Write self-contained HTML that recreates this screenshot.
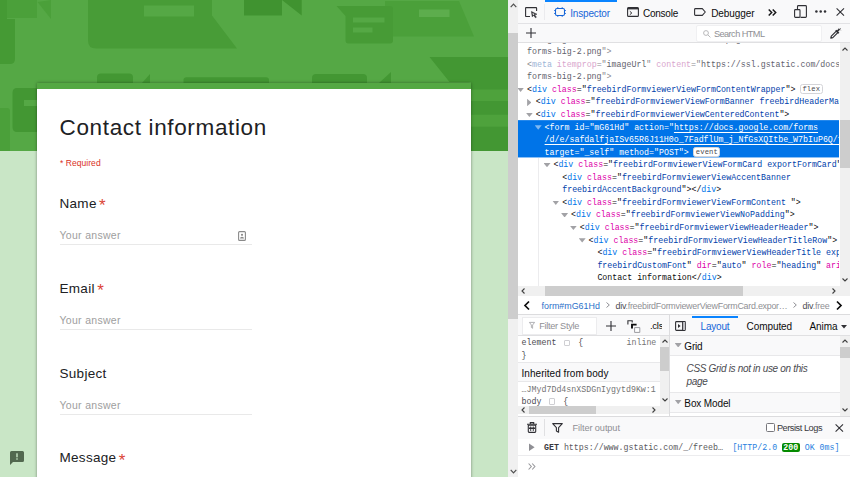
<!DOCTYPE html>
<html><head><meta charset="utf-8"><title>Contact information</title>
<style>
*{box-sizing:border-box;margin:0;padding:0}
html,body{width:850px;height:477px;overflow:hidden;background:#c9e6c6}
body{position:relative;font-family:"Liberation Sans",sans-serif;color:#202124}
#page{position:absolute;left:0;top:0;width:508px;height:477px;overflow:hidden;background:#c9e6c6}
#hdr{position:absolute;left:0;top:0;width:508px;height:151px}
#card{position:absolute;left:37px;top:83px;width:434px;height:420px;background:#fff;box-shadow:0 0 3px rgba(0,0,0,.4)}
#accent{position:absolute;left:0;top:0;width:100%;height:6px;background:#54a843}
.t{position:absolute;white-space:nowrap;line-height:1}
.title{left:59.5px;top:117px;font-size:22.5px;letter-spacing:.65px;color:#202124}
.req{left:60px;top:158.5px;font-size:8.5px;color:#d93025;letter-spacing:.05px}
.lbl{left:59.5px;font-size:13.5px;letter-spacing:.3px;color:#202124}
.lbl i{font-style:normal;color:#db4437;font-size:17px;line-height:0;position:relative;top:3.5px;margin-left:-1.7px;letter-spacing:0}
.ph{left:59.5px;font-size:10.5px;letter-spacing:.3px;color:#9e9e9e}
.ul{position:absolute;left:60px;width:192px;height:1px;background:#e9e9e9}
#pscroll{position:absolute;left:508px;top:0;width:10px;height:477px;background:#f0f0f0}
#pscroll .th{position:absolute;left:0;top:33px;width:10px;height:286px;background:#cdcdcd}
#dt{position:absolute;left:518px;top:0;width:332px;height:477px;background:#fff;font-size:9px;color:#0c0c0d;overflow:hidden}
#tb1{position:absolute;left:0;top:0;width:332px;height:24px;background:#f9f9fa;border-bottom:1px solid #e2e2e5}
#tb2{position:absolute;left:0;top:24px;width:332px;height:19px;background:#f9f9fa;border-bottom:1px solid #e0e0e2}
.ui{position:absolute;white-space:nowrap;line-height:1;font-size:9.6px;color:#0c0c0d}
.ic{position:absolute;overflow:visible}
#mk{position:absolute;left:0;top:43px;width:321px;height:243px;overflow:hidden;background:#fff}
.row{position:absolute;left:0;width:321px;height:12.5px;line-height:12.5px;white-space:pre;font-family:"Liberation Mono",monospace;font-size:8.29px;color:#0c0c0d;overflow:hidden}
.row b{font-weight:normal;color:#0074e8}
.row i{font-style:normal;color:#dd00a9}
.row u{text-decoration:none;color:#003eaa}
.row.dim{color:#8a8a8f}.row.dim b{color:#9db4d6}.row.dim i{color:#d9a6cd}.row.dim u{color:#62626c}
.row.sel,.row.sel b,.row.sel i,.row.sel u{color:#fff}

.row.sel .lk{text-decoration:underline;text-underline-offset:1.5px;text-decoration-thickness:.8px;color:#fff}
.tw{position:absolute;display:block;background:#a2a2a6}
.tw.d{width:7px;height:4.4px;top:3.7px;clip-path:polygon(0 0,100% 0,50% 100%)}
.tw.r{width:4.3px;height:7.6px;top:2.2px;clip-path:polygon(0 0,100% 50%,0 100%)}
.sel .tw.d{background:#7db8f3}
.badge{display:inline-block;font-size:7.2px;line-height:8px;height:9.4px;border:1px solid #d4d4d8;border-radius:2.5px;padding:0 1.5px;color:#4a4a4f;vertical-align:.5px;margin-left:4.5px;background:#fff;letter-spacing:.1px}
.sel .badge{display:inline-block;font-size:7.2px;line-height:8px;height:9.4px;border:1px solid #d4d4d8;border-radius:2.5px;padding:0 1.5px;color:#4a4a4f;vertical-align:.5px;margin-left:4.5px;background:#fff;letter-spacing:.1px}
.sb{position:absolute;background:#f0f0f0}
.sb .th{position:absolute;background:#cdcdcd}
.chev{position:absolute;overflow:visible}

.ui.m{font-family:"Liberation Mono",monospace;font-size:8.29px;line-height:12.5px;white-space:pre}
.sq{display:inline-block;width:6.5px;height:6.5px;border:1px solid #cfcfd3;border-radius:1px;vertical-align:-1px;margin:0 3.2px 0 2.2px}
</style></head><body>
<div id="page">
<svg id="hdr" viewBox="0 0 508 151">
<rect width="508" height="151" fill="#55a845"/>
<g fill="#4ba03a">
<path d="M6 0H37V18H6Z"/><path d="M37.500 2L51 0V19Z"/>
<path d="M385 1H459L474 36.500H389Q385 36.500 385 32.500Z"/>
<path d="M0 108H7Q10 108 10 111V151H0Z"/>
</g>
<g fill="#439733">
<path d="M0 0H7V19H15V59Q15 64 10 64H0Z" fill="#459a34"/>
<path d="M88 0H212V15.500L237 48.500H96Q88 48.500 88 40.500Z" fill="#489c37"/>
<path d="M244 0H301.700V15.500L282 0V15.500H244Z" fill="#409330"/>
<path fill="#479b36" d="M336.500 6H390Q393 6 393 9V40.500Q393 43.500 390 43.500H348.500Q345.500 43.500 345.500 40.500V16Z"/>
<path d="M429.500 57H508V151H471V82H449.500Z"/>
<path d="M17 88H37V132H17Q12.500 132 12.500 127V93Q12.500 88 17 88Z"/>
<path d="M101 73.600H129Q133 73.600 133 77.600V83H97V77.600Q97 73.600 101 73.600Z"/>
<path d="M183.500 83V80Q183.500 77.200 186.500 77.200H266Q269 77.200 269 80V83Z"/>
<path d="M316 74H363Q367 74 367 78V83H312V78Q312 74 316 74Z"/>
<path d="M142 83L150 74V83Z"/><path d="M379 83L391 72V83Z"/>
</g>
<g fill="#55a845">
<rect x="144" y="5.500" width="50" height="11"/>
<rect x="353" y="17.500" width="31.500" height="5"/>
<rect x="353" y="27.500" width="19.500" height="5"/>
<rect x="24" y="100" width="13" height="6"/>
</g>
<rect x="471" y="89.500" width="37" height="11.500" fill="#4ea23c"/>
<rect x="471" y="114.700" width="37" height="12" fill="#4ea23c"/>
<rect x="419" y="9.500" width="30.500" height="7.500" fill="#5dad4d"/>
</svg>
<div id="card"><div id="accent"></div></div>
<div class="t title">Contact information</div>
<div class="t req">* Required</div>
<div class="t lbl" style="top:196.5px">Name <i>*</i></div>
<div class="t ph" style="top:230px">Your answer</div>
<div class="ul" style="top:244px"></div>
<svg class="ic" style="left:238.200px;top:230.700px" width="8" height="10" viewBox="0 0 8 10"><rect x=".6" y=".6" width="6.800" height="8.800" rx="1" fill="none" stroke="#8a8a8a" stroke-width="1.100"/><circle cx="4" cy="3.800" r="1.100" fill="#8a8a8a"/><path d="M2 7.600Q2 5.800 4 5.800Q6 5.800 6 7.600Z" fill="#8a8a8a"/></svg>
<div class="t lbl" style="top:281.5px">Email <i>*</i></div>
<div class="t ph" style="top:315px">Your answer</div>
<div class="ul" style="top:329px"></div>
<div class="t lbl" style="top:366.500px">Subject</div>
<div class="t ph" style="top:399.800px">Your answer</div>
<div class="ul" style="top:414px"></div>
<div class="t lbl" style="top:451px">Message <i>*</i></div>
<svg class="ic" style="left:9.500px;top:451px" width="14" height="14" viewBox="0 0 14 14"><path d="M1.500 0H12.500Q14 0 14 1.500V9.500Q14 11 12.500 11H3L0 14V1.500Q0 0 1.500 0Z" fill="#52684f"/><rect x="6.300" y="2.300" width="1.400" height="4" fill="#c9e6c6"/><rect x="6.300" y="7.300" width="1.400" height="1.400" fill="#c9e6c6"/></svg>
</div>
<div id="pscroll"><div class="th"></div>
<svg class="chev" style="left:1.5px;top:3px" width="7" height="5" viewBox="0 0 7 5"><path d="M.7 4.200L3.500 1.200L6.300 4.200" fill="none" stroke="#505050" stroke-width="1.200"/></svg>
<svg class="chev" style="left:1.5px;top:469px" width="7" height="5" viewBox="0 0 7 5"><path d="M.7 .8L3.500 3.800L6.300 .8" fill="none" stroke="#505050" stroke-width="1.200"/></svg>
</div>
<div id="dt">
<div id="tb1"></div><div id="tb2"></div>
<div style="position:absolute;left:27.4px;top:0;width:72px;height:1.6px;background:#0a84ff"></div>
<div style="position:absolute;left:26.3px;top:4px;width:1px;height:16px;background:#ebebee"></div>
<svg class="ic" style="left:7.0px;top:7px" width="13" height="11" viewBox="0 0 13 11"><path d="M5 9.500H1.200Q.6 9.500 .6 8.900V1.200Q.6 .6 1.200 .6H11Q11.600 .6 11.600 1.200V4" fill="none" stroke="#303035" stroke-width="1.100"/><path d="M6.400 4.400L12 7.200L9.700 7.800L11.400 10.200L10.400 10.800L8.800 8.400L7.200 9.800Z" fill="#303035" stroke="#303035" stroke-width=".5" stroke-linejoin="round"/><path d="M7.400 6L8 8.300L9.600 7.100Z" fill="#fff"/></svg>
<svg class="ic" style="left:36.0px;top:7px" width="12" height="10" viewBox="0 0 12 10"><rect x="1.500" y="1.500" width="9" height="7" rx="1.500" fill="none" stroke="#1565d8" stroke-width="1.100"/><path d="M3.800 0V1.500M8.200 0V1.500M3.800 8.500V10M8.200 8.500V10M0 3.500H1.500M0 6.500H1.500M10.500 3.500H12M10.500 6.500H12" stroke="#1565d8" stroke-width=".8"/></svg>
<div class="ui" style="left:52.15px;top:8.50px;font-size:10px;letter-spacing:-0.160px;color:#1565d8;">Inspector</div>
<svg class="ic" style="left:108.5px;top:7px" width="12" height="10" viewBox="0 0 12 10"><rect x=".6" y=".6" width="10.800" height="8.800" rx="1" fill="none" stroke="#303035" stroke-width="1.100"/><rect x=".6" y=".6" width="10.800" height="1.800" fill="#303035"/><path d="M2.800 4.300L4.800 6L2.800 7.700" fill="none" stroke="#303035" stroke-width="1"/></svg>
<div class="ui" style="left:124.95px;top:8.50px;font-size:10px;letter-spacing:-0.229px;color:#0c0c0d;">Console</div>
<svg class="ic" style="left:176.4px;top:8px" width="12" height="8" viewBox="0 0 12 8"><path d="M1.500 .6H8.300L11.300 4L8.300 7.400H1.500Q.6 7.400 .6 6.500V1.500Q.6 .6 1.500 .6Z" fill="none" stroke="#303035" stroke-width="1.100" stroke-linejoin="round"/></svg>
<div class="ui" style="left:193.15px;top:8.50px;font-size:10px;letter-spacing:-0.078px;color:#0c0c0d;">Debugger</div>
<svg class="ic" style="left:250.0px;top:9px" width="9" height="7" viewBox="0 0 9 7"><path d="M.7 .5L3.700 3.500L.7 6.500M4.700 .5L7.700 3.500L4.700 6.500" fill="none" stroke="#18181a" stroke-width="1.500"/></svg>
<svg class="ic" style="left:276.0px;top:5.200px" width="13" height="13" viewBox="0 0 13 13"><path d="M3.500 4V1.500Q3.500 .6 4.400 .6H11.500Q12.400 .6 12.400 1.500V11.500Q12.400 12.400 11.500 12.400H6.500" fill="none" stroke="#303035" stroke-width="1.100"/><rect x=".6" y="4.600" width="5.400" height="7.800" rx=".8" fill="none" stroke="#303035" stroke-width="1.100"/></svg>
<svg class="ic" style="left:297.0px;top:10.300px" width="12" height="3" viewBox="0 0 12 3"><circle cx="1.400" cy="1.400" r="1.250" fill="#303035"/><circle cx="5.700" cy="1.400" r="1.250" fill="#303035"/><circle cx="10" cy="1.400" r="1.250" fill="#303035"/></svg>
<svg class="ic" style="left:318.0px;top:8px" width="9" height="8" viewBox="0 0 9 8"><path d="M.6 .4L8 7.600M8 .4L.6 7.600" stroke="#303035" stroke-width="1.100"/></svg>
<svg class="ic" style="left:8.4px;top:28px" width="10" height="10" viewBox="0 0 10 10"><path d="M5 0V10M0 5H10" stroke="#303035" stroke-width="1.100"/></svg>
<div style="position:absolute;left:178.0px;top:25px;width:126px;height:16.500px;background:#fff;border:1px solid #f0f0f2;border-radius:2px"></div>
<svg class="ic" style="left:185.0px;top:29.500px" width="8" height="8" viewBox="0 0 8 8"><circle cx="3" cy="3" r="2.400" fill="none" stroke="#b1b1b3" stroke-width=".9"/><path d="M4.800 4.800L7.400 7.400" stroke="#b1b1b3" stroke-width=".9"/></svg>
<div class="ui" style="left:195.95px;top:29.90px;font-size:9.2px;letter-spacing:-0.562px;color:#8f8f94;">Search HTML</div>
<svg class="ic" style="left:312.4px;top:28px" width="11" height="11" viewBox="0 0 11 11"><path d="M.8 10.200L1.300 8.200L6.300 3.200L7.800 4.700L2.800 9.700Z" fill="none" stroke="#303035" stroke-width="1.200" stroke-linejoin="round"/><path d="M5.800 2.200L8.800 5.200M7 3.600L9.200 1.400" stroke="#303035" stroke-width="1.600"/><path d="M8.700 .3L10.700 2.300M10.700 .3L8.700 2.300" stroke="#303035" stroke-width=".7"/></svg>
<div id="mk"><svg style="position:absolute;left:0;top:77px" width="321" height="39" viewBox="0 0 321 39"><rect x="0" y=".15" width="321" height="37.300" fill="#0074e8"/></svg><div class="row dim" style="top:-9.30px;padding-left:9.0px"><u>lh3.googleusercontent.com/forms-icon-1x.png</u>"&gt;</div>
<div class="row dim" style="top:3.25px;padding-left:9.0px"><u>forms-big-2.png</u>"&gt;</div>
<div class="row dim" style="top:15.80px;padding-left:9.0px">&lt;<b>meta</b> <i>itemprop</i>="<u>imageUrl</u>" <i>content</i>="<u>https://ssl.gstatic.com/docs/forms/</u></div>
<div class="row dim" style="top:28.35px;padding-left:9.0px"><u>forms-big-2.png</u>"&gt;</div>
<div class="row " style="top:40.90px;padding-left:9.0px"><span class="tw d" style="left:-0.9px"></span>&lt;<b>div</b> <i>class</i>="<u>freebirdFormviewerViewFormContentWrapper</u>"&gt;<span class="badge">flex</span></div>
<div class="row " style="top:53.45px;padding-left:17.8px"><span class="tw r" style="left:9.1px"></span>&lt;<b>div</b> <i>class</i>="<u>freebirdFormviewerViewFormBanner freebirdHeaderMask</u></div>
<div class="row " style="top:66.00px;padding-left:17.8px"><span class="tw d" style="left:7.9px"></span>&lt;<b>div</b> <i>class</i>="<u>freebirdFormviewerViewCenteredContent</u>"&gt;</div>
<div class="row sel" style="top:78.55px;padding-left:26.6px"><span class="tw d" style="left:16.7px"></span>&lt;<b>form</b> <i>id</i>="<u>mG61Hd</u>" <i>action</i>="<span class="lk">https://docs.google.com/forms</span></div>
<div class="row sel" style="top:91.10px;padding-left:26.6px"><span class="lk">/d/e/safdalfjaISv65R6J11H0o_7FadflUm_j_NfGsXQItbe_W7bIuP6Q/formResponse</span></div>
<div class="row sel" style="top:103.65px;padding-left:26.6px"><i>target</i>="<u>_self</u>" <i>method</i>="<u>POST</u>"&gt;<span class="badge">event</span></div>
<div class="row " style="top:116.20px;padding-left:35.4px"><span class="tw d" style="left:25.5px"></span>&lt;<b>div</b> <i>class</i>="<u>freebirdFormviewerViewFormCard exportFormCard</u>"&gt;</div>
<div class="row " style="top:128.75px;padding-left:44.2px">&lt;<b>div</b> <i>class</i>="<u>freebirdFormviewerViewAccentBanner</u></div>
<div class="row " style="top:141.30px;padding-left:44.2px"><u>freebirdAccentBackground</u>"&gt;&lt;/<b>div</b>&gt;</div>
<div class="row " style="top:153.85px;padding-left:44.2px"><span class="tw d" style="left:34.3px"></span>&lt;<b>div</b> <i>class</i>="<u>freebirdFormviewerViewFormContent </u>"&gt;</div>
<div class="row " style="top:166.40px;padding-left:53.0px"><span class="tw d" style="left:43.1px"></span>&lt;<b>div</b> <i>class</i>="<u>freebirdFormviewerViewNoPadding</u>"&gt;</div>
<div class="row " style="top:178.95px;padding-left:61.8px"><span class="tw d" style="left:51.9px"></span>&lt;<b>div</b> <i>class</i>="<u>freebirdFormviewerViewHeaderHeader</u>"&gt;</div>
<div class="row " style="top:191.50px;padding-left:70.6px"><span class="tw d" style="left:60.7px"></span>&lt;<b>div</b> <i>class</i>="<u>freebirdFormviewerViewHeaderTitleRow</u>"&gt;</div>
<div class="row " style="top:204.05px;padding-left:79.4px">&lt;<b>div</b> <i>class</i>="<u>freebirdFormviewerViewHeaderTitle exportFormTitle</u></div>
<div class="row " style="top:216.60px;padding-left:79.4px"><u>freebirdCustomFont</u>" <i>dir</i>="<u>auto</u>" <i>role</i>="<u>heading</u>" <i>aria-level</i>="<u>1</u>"&gt;</div>
<div class="row " style="top:229.15px;padding-left:79.4px">Contact information&lt;/<b>div</b>&gt;</div><div style="position:absolute;left:20.0px;top:115px;width:1px;height:128px;background:#ececee"></div></div>
<div class="sb" style="left:321.6px;top:43px;width:10.400px;height:243px"><div class="th" style="left:.4px;top:77px;width:10px;height:48px"></div><svg class="chev" style="left:2.4px;top:3.5px" width="6" height="4" viewBox="0 0 6 4"><path d="M.5 3.500L3 1L5.500 3.500" fill="none" stroke="#404040" stroke-width="1.100"/></svg><svg class="chev" style="left:2.4px;top:234.5px" width="6" height="4" viewBox="0 0 6 4"><path d="M.5 .5L3 3L5.500 .5" fill="none" stroke="#404040" stroke-width="1.100"/></svg></div>
<div class="sb" style="left:0;top:286px;width:321.600px;height:9.500px"><div class="th" style="left:26.6px;top:0;width:198px;height:9.500px"></div><svg class="chev" style="left:3px;top:2px" width="4" height="6" viewBox="0 0 4 6"><path d="M3.500 .5L1 3L3.500 5.500" fill="none" stroke="#404040" stroke-width="1.100"/></svg><svg class="chev" style="left:314.0px;top:2px" width="4" height="6" viewBox="0 0 4 6"><path d="M.5 .5L3 3L.5 5.500" fill="none" stroke="#404040" stroke-width="1.100"/></svg></div>
<div style="position:absolute;left:321.6px;top:286px;width:10.400px;height:9.500px;background:#f0f0f0"></div>
<div style="position:absolute;left:0;top:295.500px;width:332px;height:19.500px;background:#fff;border-bottom:1px solid #dcdcde"></div>
<svg class="ic" style="left:6.0px;top:301px" width="6" height="9" viewBox="0 0 6 9"><path d="M5 .5L1 4.500L5 8.500" fill="none" stroke="#0c0c0d" stroke-width="1.700"/></svg>
<div class="ui" style="left:23.55px;top:302.10px;font-size:8.9px;letter-spacing:0.009px;color:#2a6fc9;">form#mG61Hd</div>
<svg class="ic" style="left:88.0px;top:302px" width="4" height="6" viewBox="0 0 4 6"><path d="M.5 .5L3.300 3L.5 5.500" fill="none" stroke="#8f8f94" stroke-width="1"/></svg>
<div class="ui" style="left:97.55px;top:302.10px;font-size:8.9px;letter-spacing:-0.250px;color:#8f8f94;"><span style="color:#4a4a4f">div</span>.freebirdFormviewerViewFormCard.expor…</div>
<svg class="ic" style="left:275.0px;top:302px" width="4" height="6" viewBox="0 0 4 6"><path d="M.5 .5L3.300 3L.5 5.500" fill="none" stroke="#8f8f94" stroke-width="1"/></svg>
<div class="ui" style="left:284.55px;top:302.10px;font-size:8.9px;letter-spacing:-0.194px;color:#8f8f94;"><span style="color:#4a4a4f">div</span>.free</div>
<svg class="ic" style="left:318.0px;top:301px" width="6" height="9" viewBox="0 0 6 9"><path d="M1 .5L5 4.500L1 8.500" fill="none" stroke="#0c0c0d" stroke-width="1.700"/></svg>
<div style="position:absolute;left:0;top:315px;width:332px;height:20.500px;background:#f9f9fa;border-bottom:1px solid #e0e0e2"></div>
<div style="position:absolute;left:4.0px;top:317px;width:75px;height:17.500px;background:#fff;border:1px solid #ececee"></div>
<svg class="ic" style="left:11.4px;top:322px" width="6" height="7" viewBox="0 0 6 7"><path d="M.4 .4H5.600L3.600 3V6.300L2.400 5.500V3Z" fill="none" stroke="#a0a0a3" stroke-width=".8" stroke-linejoin="round"/></svg>
<div class="ui" style="left:21.15px;top:322.40px;font-size:9.2px;letter-spacing:-0.292px;color:#8f8f94;">Filter Style</div>
<svg class="ic" style="left:88.0px;top:321px" width="10" height="10" viewBox="0 0 10 10"><path d="M5 0V10M0 5H10" stroke="#303035" stroke-width="1.100"/></svg>
<svg class="ic" style="left:109.0px;top:319.500px" width="14" height="13" viewBox="0 0 14 13"><path d="M.9 4.500V.7H5.200V2.400" fill="none" stroke="#303035" stroke-width="1.100"/><path d="M5 8.400V4.600H9.600" fill="none" stroke="#0c0c0d" stroke-width="1.900"/><path d="M7.600 7.600H12.800V12.400H7.600Z" fill="#fff" stroke="#909095" stroke-width=".9"/></svg>
<div class="ui" style="left:132.0px;top:320.800px;font-size:9.600px;letter-spacing:-.3px;width:11.500px;overflow:hidden">.cls</div>
<div style="position:absolute;left:150.6px;top:315px;width:1px;height:101px;background:#dcdcde"></div>
<svg class="ic" style="left:157.0px;top:321px" width="11" height="10" viewBox="0 0 11 10"><rect x=".6" y=".6" width="9.800" height="8.800" rx=".8" fill="none" stroke="#303035" stroke-width="1.100"/><rect x="7.600" y="1" width="2.600" height="8" fill="#c4c4c8"/><path d="M7.600 .6V9.400" stroke="#303035" stroke-width="1"/><path d="M3 3L5.600 5L3 7Z" fill="#303035"/></svg>
<div style="position:absolute;left:174.0px;top:315.800px;width:46px;height:1.800px;background:#0a84ff"></div>
<div class="ui" style="left:182.55px;top:322.10px;font-size:10px;letter-spacing:-0.189px;color:#1565d8;">Layout</div>
<div class="ui" style="left:228.55px;top:322.10px;font-size:10px;letter-spacing:-0.080px;color:#0c0c0d;">Computed</div>
<div class="ui" style="left:291.55px;top:322.10px;font-size:10px;letter-spacing:-0.092px;color:#0c0c0d;">Anima</div>
<svg class="ic" style="left:323.0px;top:324.500px" width="6" height="4" viewBox="0 0 6 4"><path d="M0 0H6L3 3.500Z" fill="#303035"/></svg>
<div style="position:absolute;left:0;top:335.500px;width:142px;height:71px;background:#fff;overflow:hidden"><div style="position:absolute;left:0;top:26.500px;width:142px;height:19.500px;background:#f9f9fa;border-top:1px solid #e8e8ea;border-bottom:1px solid #e8e8ea"></div></div>
<div class="ui m" style="left:3.6px;top:337.25px;color:#4a4a4f;">element <span class="sq"></span> {</div>
<div class="ui m" style="left:108.5px;top:337.25px;color:#737373;">inline</div>
<div class="ui m" style="left:3.6px;top:349.85px;color:#4a4a4f;">}</div>
<div class="ui" style="left:3.55px;top:368.60px;font-size:10px;letter-spacing:0.038px;color:#0c0c0d;">Inherited from body</div>
<div class="ui m" style="left:3.6px;top:384.25px;color:#737373;">…JMyd7Dd4snXSDGnIygytd9Kw:1</div>
<div class="ui m" style="left:3.6px;top:395.85px;color:#4a4a4f;">body <span class="sq"></span> {</div>
<div class="sb" style="left:142.0px;top:335.500px;width:9px;height:70.500px"><div class="th" style="left:0;top:11.500px;width:9px;height:24px"></div><svg class="chev" style="left:1.5px;top:3.5px" width="6" height="4" viewBox="0 0 6 4"><path d="M.5 3.500L3 1L5.500 3.500" fill="none" stroke="#404040" stroke-width="1.100"/></svg><svg class="chev" style="left:1.5px;top:62px" width="6" height="4" viewBox="0 0 6 4"><path d="M.5 .5L3 3L5.500 .5" fill="none" stroke="#404040" stroke-width="1.100"/></svg></div>
<div class="sb" style="left:0;top:406px;width:150.500px;height:8px"><div class="th" style="left:11.0px;top:0;width:67px;height:8px"></div><svg class="chev" style="left:3px;top:1px" width="4" height="6" viewBox="0 0 4 6"><path d="M3.500 .5L1 3L3.500 5.500" fill="none" stroke="#404040" stroke-width="1.100"/></svg><svg class="chev" style="left:134.0px;top:1px" width="4" height="6" viewBox="0 0 4 6"><path d="M.5 .5L3 3L.5 5.500" fill="none" stroke="#404040" stroke-width="1.100"/></svg></div>
<div style="position:absolute;left:151.6px;top:335.500px;width:170.4px;height:80px;background:#fff;overflow:hidden"><div style="position:absolute;left:0;top:0;width:100%;height:20.500px;background:#f9f9fa;border-bottom:1px solid #e8e8ea"></div><div style="position:absolute;left:0;top:56px;width:100%;height:21.500px;background:#f9f9fa;border-top:1px solid #e8e8ea;border-bottom:1px solid #e8e8ea"></div></div>
<span class="tw d" style="left:156.7px;top:343px"></span>
<div class="ui" style="left:166.35px;top:341.80px;font-size:10px;letter-spacing:-0.202px;color:#0c0c0d;">Grid</div>
<div class="ui" style="left:168.55px;top:363.80px;font-size:10px;letter-spacing:-0.324px;color:#4a4a4f;font-style:italic;">CSS Grid is not in use on this</div>
<div class="ui" style="left:168.55px;top:377.20px;font-size:10px;letter-spacing:-0.338px;color:#4a4a4f;font-style:italic;">page</div>
<span class="tw d" style="left:156.7px;top:399.800px"></span>
<div class="ui" style="left:166.35px;top:398.50px;font-size:10px;letter-spacing:-0.128px;color:#0c0c0d;">Box Model</div>
<div class="sb" style="left:321.6px;top:335.500px;width:10.400px;height:80px"><div class="th" style="left:.4px;top:11.500px;width:10px;height:10.500px"></div><svg class="chev" style="left:2.4px;top:3.5px" width="6" height="4" viewBox="0 0 6 4"><path d="M.5 3.500L3 1L5.500 3.500" fill="none" stroke="#404040" stroke-width="1.100"/></svg><svg class="chev" style="left:2.4px;top:72px" width="6" height="4" viewBox="0 0 6 4"><path d="M.5 .5L3 3L5.500 .5" fill="none" stroke="#404040" stroke-width="1.100"/></svg></div>
<div style="position:absolute;left:0;top:415.700px;width:332px;height:24px;background:#f9f9fa;border-top:1px solid #dcdcde;border-bottom:1px solid #e0e0e2"></div>
<div style="position:absolute;left:0;top:439px;width:332px;height:38px;background:#fff"></div>
<div style="position:absolute;left:0;top:455px;width:332px;height:1px;background:#ececee"></div>
<svg class="ic" style="left:8.6px;top:421.500px" width="10" height="11" viewBox="0 0 10 11"><path d="M0 2.200H10M3.300 2.200V.6H6.700V2.200" fill="none" stroke="#303035" stroke-width="1.100"/><path d="M1.300 3.300H8.700V9.600Q8.700 10.400 7.900 10.400H2.100Q1.300 10.400 1.300 9.600Z" fill="none" stroke="#303035" stroke-width="1.100"/><path d="M3.700 4.500V9M6.300 4.500V9" stroke="#303035" stroke-width=".9"/><rect x="2" y="5.500" width="6" height="1.500" fill="#303035"/></svg>
<div style="position:absolute;left:26.4px;top:419px;width:1px;height:17px;background:#e0e0e2"></div>
<svg class="ic" style="left:33.6px;top:422.500px" width="11" height="10" viewBox="0 0 11 10"><path d="M.7 .6H10.300L6.600 4.600V9.300L4.400 8V4.600Z" fill="none" stroke="#303035" stroke-width="1.100" stroke-linejoin="round"/></svg>
<div class="ui" style="left:54.55px;top:424.40px;font-size:9.2px;letter-spacing:-0.094px;color:#8f8f94;">Filter output</div>
<div style="position:absolute;left:248.4px;top:423px;width:8.600px;height:8.600px;background:#fff;border:1px solid #77777c;border-radius:1.500px"></div>
<div class="ui" style="left:258.95px;top:424.40px;font-size:9.2px;letter-spacing:-0.455px;color:#38383d;">Persist Logs</div>
<svg class="ic" style="left:317.4px;top:424px" width="9" height="8" viewBox="0 0 9 8"><path d="M.6 .4L8 7.600M8 .4L.6 7.600" stroke="#303035" stroke-width="1.100"/></svg>
<span class="tw r" style="left:11.0px;top:443.400px;width:5.600px;height:7.600px;background:#8f8f94"></span>
<div class="ui m" style="left:26.0px;top:442.25px;color:#5a5a5e;"><span style="font-weight:bold;color:#38383d">GET</span> https://www.gstatic.com/_/freeb…</div>
<div class="ui m" style="left:214.4px;top:442.25px;color:#2a7fe0;">[HTTP/2.0 <span style="background:#058b00;color:#fff;font-weight:bold;border-radius:2px;padding:0 1.5px;margin:0 0 0 -.3px">200</span> OK 0ms]</div>
<svg class="ic" style="left:10.0px;top:462.500px" width="8" height="7" viewBox="0 0 8 7"><path d="M.6 .5L3.300 3.500L.6 6.500M4.200 .5L6.900 3.500L4.200 6.500" fill="none" stroke="#98989c" stroke-width="1.100"/></svg>
</div>
</body></html>
